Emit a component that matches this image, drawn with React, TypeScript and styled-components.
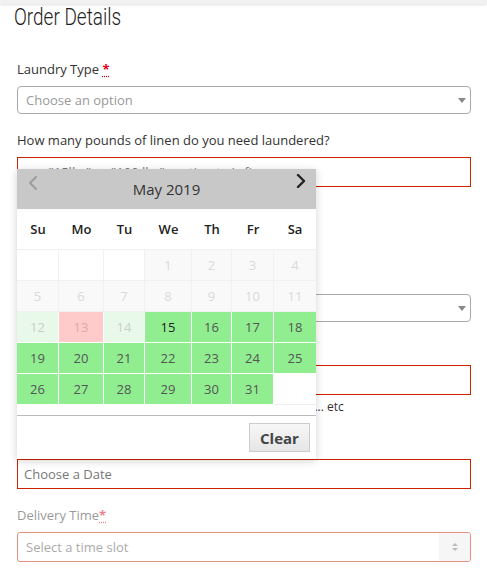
import React from 'react';
import styled, { createGlobalStyle } from 'styled-components';

type Kind = 'blank' | 'off' | 'past' | 'closed' | 'open' | 'today' | 'tail';

interface Day {
  n?: number;
  kind: Kind;
}

const COLS = '42px 45px 41px 47px 40px 42px 42px';

const tones: Record<Kind, { bg: string; fg: string; line: string }> = {
  blank: { bg: '#fff', fg: '#ddd', line: '#f1f1f1' },
  off: { bg: '#f9f9f9', fg: '#dadada', line: '#f1f1f1' },
  past: { bg: '#e9f9e9', fg: '#cdcdcd', line: '#fff' },
  closed: { bg: '#ffcaca', fg: '#e6a6a6', line: '#fff' },
  open: { bg: '#90ee90', fg: '#555', line: '#fff' },
  today: { bg: '#90ee90', fg: '#1c1c1c', line: '#fff' },
  tail: { bg: '#fff', fg: '#555', line: '#eee' },
};

const buildMonth = (): Day[] => {
  const days: Day[] = [{ kind: 'blank' }, { kind: 'blank' }, { kind: 'blank' }];
  for (let n = 1; n <= 31; n++) {
    let kind: Kind = 'open';
    if (n <= 11) kind = 'off';
    else if (n === 13) kind = 'closed';
    else if (n < 15) kind = 'past';
    else if (n === 15) kind = 'today';
    days.push({ n, kind });
  }
  days.push({ kind: 'tail' });
  return days;
};

const weekDays = ['Su', 'Mo', 'Tu', 'We', 'Th', 'Fr', 'Sa'];

const GlobalStyle = createGlobalStyle`
  html, body {
    margin: 0;
    padding: 0;
    background: #fff;
  }
  body {
    font-family: "Open Sans", "Liberation Sans", sans-serif;
    font-size: 13px;
    color: #333;
  }
  * {
    box-sizing: border-box;
  }
`;

const Page = styled.div`
  width: 487px;
  height: 570px;
  overflow: hidden;
`;

const TopBar = styled.div`
  height: 4px;
  background: #f1f1f1;
  box-shadow: 0 1px 3px rgba(0, 0, 0, 0.12);
`;

const Heading = styled.h2`
  width: fit-content;
  margin: -1px 0 0 14px;
  font-family: Roboto, "Liberation Sans", sans-serif;
  font-weight: 300;
  font-size: 24px;
  line-height: 28px;
  color: #222;
  white-space: nowrap;
  transform: scaleX(0.79);
  transform-origin: left center;
`;

const Form = styled.form`
  padding: 28px 16px 0 17px;
`;

const Field = styled.div<{ $disabled?: boolean }>`
  margin-bottom: 16px;
  opacity: ${(p) => (p.$disabled ? 0.5 : 1)};
`;

const Label = styled.label`
  display: block;
  margin-bottom: 7px;
  line-height: 20px;
  font-size: 13px;
  color: #333;
`;

const Required = styled.abbr`
  color: #e3001b;
  font-weight: 700;
  text-decoration: underline dotted;
  text-underline-offset: 2px;
  border: none;
`;

const SelectBox = styled.div`
  display: flex;
  align-items: center;
  justify-content: space-between;
  height: 28px;
  padding: 0 4px 0 8px;
  border: 1px solid #aaa;
  border-radius: 4px;
  color: #999;
  font-size: 13px;
`;

const Caret = styled.span`
  width: 0;
  height: 0;
  border-top: 5px solid #888;
  border-left: 4px solid transparent;
  border-right: 4px solid transparent;
`;

const DateWrap = styled.div`
  position: relative;
`;

const TextInput = styled.input`
  display: block;
  width: 100%;
  height: 30px;
  padding: 0 6px;
  border: 1px solid #cc2200;
  border-radius: 0;
  font-family: "Open Sans", "Liberation Sans", sans-serif;
  font-size: 13px;
  color: #555;
  outline: none;

  &::placeholder {
    color: #777;
  }
`;

const Hint = styled.p<{ $tight?: boolean }>`
  margin: ${(p) => (p.$tight ? '3px 0 0' : '4px 0 0')};
  line-height: ${(p) => (p.$tight ? '18px' : '20px')};
  font-size: ${(p) => (p.$tight ? '12px' : '13px')};
  color: #333;
  white-space: nowrap;
`;

const SpinSelect = styled.div`
  display: flex;
  height: 30px;
  border: 1px solid #cc2200;
  border-radius: 3px;
  overflow: hidden;
`;

const SpinValue = styled.span`
  flex: 1;
  display: flex;
  align-items: center;
  padding-left: 8px;
  color: #555;
`;

const SpinArrows = styled.span`
  width: 31px;
  display: flex;
  flex-direction: column;
  align-items: center;
  justify-content: center;
  gap: 2px;
  background: #eee;

  &::before,
  &::after {
    content: '';
    width: 0;
    height: 0;
    border-left: 3px solid transparent;
    border-right: 3px solid transparent;
  }
  &::before {
    border-bottom: 3px solid #777;
  }
  &::after {
    border-top: 3px solid #777;
  }
`;

const Calendar = styled.div`
  position: absolute;
  left: 0;
  bottom: 100%;
  z-index: 10;
  width: 299px;
  background: #fff;
  box-shadow: 0 2px 8px rgba(0, 0, 0, 0.18);
`;

const CalHeader = styled.div`
  display: grid;
  grid-template-columns: 40px 1fr 40px;
  height: 40px;
  background: #c8c8c8;
`;

const NavButton = styled.button<{ $side: 'prev' | 'next' }>`
  align-self: start;
  justify-self: ${(p) => (p.$side === 'prev' ? 'start' : 'end')};
  margin: ${(p) => (p.$side === 'prev' ? '7px 0 0 11px' : '5px 10px 0 0')};
  padding: 0;
  border: none;
  background: none;
  line-height: 0;
  cursor: pointer;
`;

const MonthTitle = styled.div`
  align-self: center;
  text-align: center;
  font-size: 15px;
  color: #333;
`;

const WeekRow = styled.div`
  display: grid;
  grid-template-columns: ${COLS};
  align-items: center;
  height: 40px;
`;

const WeekDay = styled.span`
  text-align: center;
  font-size: 13px;
  font-weight: 600;
  color: #222;
`;

const DayGrid = styled.div`
  display: grid;
  grid-template-columns: ${COLS};
  grid-auto-rows: 31px;
  border-top: 1px solid #f1f1f1;
`;

const DayCell = styled.span<{ $kind: Kind }>`
  display: block;
  line-height: 30px;
  text-align: center;
  font-size: 13px;
  background: ${(p) => tones[p.$kind].bg};
  color: ${(p) => tones[p.$kind].fg};
  border-right: 1px solid ${(p) => tones[p.$kind].line};
  border-bottom: 1px solid ${(p) => tones[p.$kind].line};

  &:nth-child(7n) {
    border-right: none;
  }
`;

const GridEnd = styled.div`
  height: 10px;
`;

const CalFooter = styled.div`
  display: flex;
  justify-content: flex-end;
  padding: 7px 6px;
  border-top: 1px solid #bbb;
`;

const ClearButton = styled.button`
  height: 29px;
  width: 61px;
  padding: 0;
  border: 1px solid #ccc;
  background: linear-gradient(#f7f7f7, #e6e6e6);
  font-family: "Open Sans", "Liberation Sans", sans-serif;
  font-size: 15px;
  font-weight: 700;
  color: #444;
  cursor: pointer;
`;

const Chevron = ({ dir, color }: { dir: 'left' | 'right'; color: string }) => (
  <svg width="10" height="14" viewBox="0 0 10 14" fill="none">
    <polyline
      points={dir === 'left' ? '8,1 2,7 8,13' : '2,1 8,7 2,13'}
      stroke={color}
      strokeWidth={dir === 'left' ? 1.8 : 2.4}
      strokeLinecap="round"
      strokeLinejoin="round"
    />
  </svg>
);

const App = () => {
  const month = buildMonth();

  return (
    <Page>
      <GlobalStyle />
      <TopBar />
      <Heading>Order Details</Heading>
      <Form onSubmit={(e) => e.preventDefault()}>
        <Field>
          <Label>
            Laundry Type <Required title="required">*</Required>
          </Label>
          <SelectBox>
            Choose an option
            <Caret />
          </SelectBox>
        </Field>

        <Field>
          <Label>How many pounds of linen do you need laundered?</Label>
          <TextInput placeholder={'e.g. "15lbs" or "100 lbs" - estimate is fine'} />
          <Hint>
            Your best estimate is fine.
            <br />
            We weigh every order at pickup
            <br />
            and bill by the actual weight.
          </Hint>
        </Field>

        <Field>
          <Label>
            Service <Required title="required">*</Required>
          </Label>
          <SelectBox>
            Choose an option
            <Caret />
          </SelectBox>
        </Field>

        <Field>
          <Label>
            Pickup Location <Required title="required">*</Required>
          </Label>
          <TextInput />
          <Hint $tight>e.g. Front desk, housekeeping, service entrance door ... etc</Hint>
        </Field>

        <Field>
          <Label>
            Pickup Date <Required title="required">*</Required>
          </Label>
          <DateWrap>
            <TextInput placeholder="Choose a Date" />
            <Calendar>
              <CalHeader>
                <NavButton type="button" $side="prev">
                  <Chevron dir="left" color="#9a9a9a" />
                </NavButton>
                <MonthTitle>May 2019</MonthTitle>
                <NavButton type="button" $side="next">
                  <Chevron dir="right" color="#222" />
                </NavButton>
              </CalHeader>
              <WeekRow>
                {weekDays.map((d) => (
                  <WeekDay key={d}>{d}</WeekDay>
                ))}
              </WeekRow>
              <DayGrid>
                {month.map((d, i) => (
                  <DayCell key={i} $kind={d.kind}>
                    {d.n}
                  </DayCell>
                ))}
              </DayGrid>
              <GridEnd />
              <CalFooter>
                <ClearButton type="button">Clear</ClearButton>
              </CalFooter>
            </Calendar>
          </DateWrap>
        </Field>

        <Field $disabled>
          <Label>
            Delivery Time<Required title="required">*</Required>
          </Label>
          <SpinSelect>
            <SpinValue>Select a time slot</SpinValue>
            <SpinArrows />
          </SpinSelect>
        </Field>
      </Form>
    </Page>
  );
};

export default App;
